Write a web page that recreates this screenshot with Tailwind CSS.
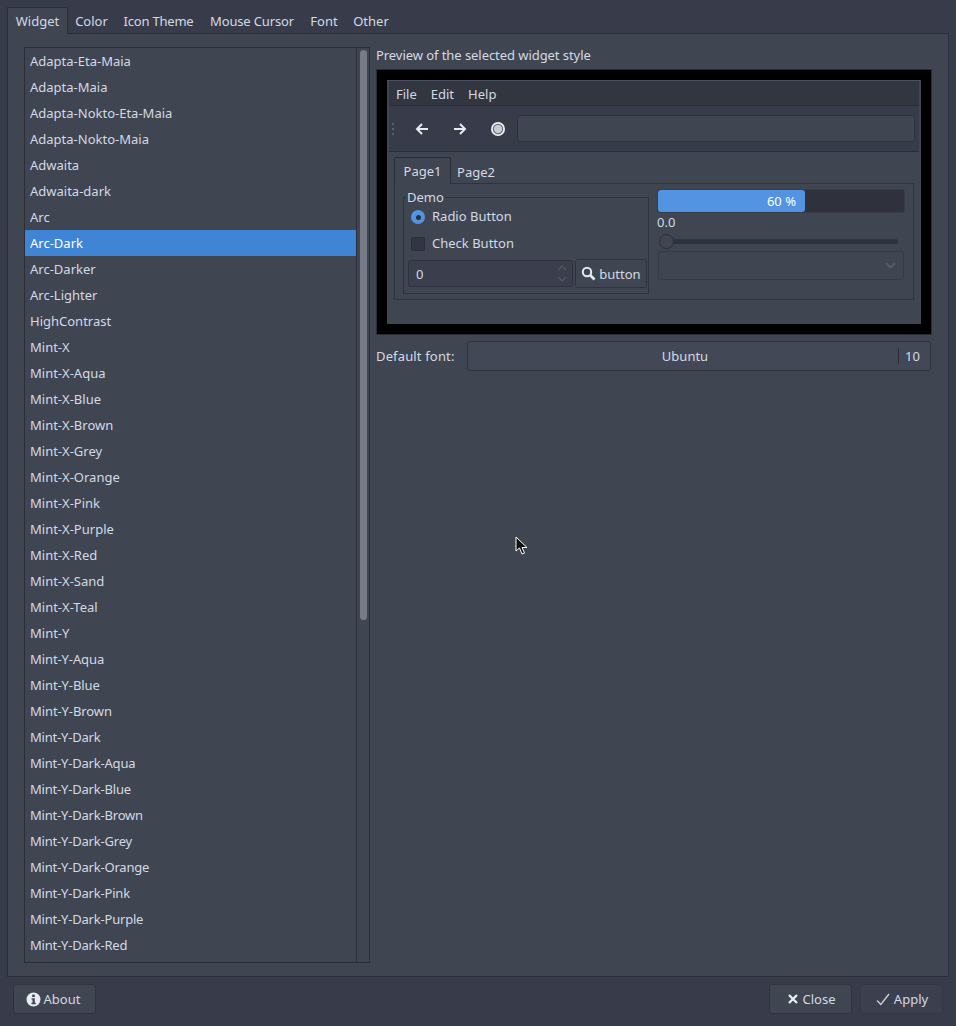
<!DOCTYPE html>
<html lang="en">
  <head>
    <meta charset="UTF-8" />
    <title>Qt5 Settings</title>
    <script src="https://cdn.jsdelivr.net/npm/@tailwindcss/browser@4"></script>
  </head>

  <body class="relative w-[956px] h-[1026px] overflow-hidden bg-[#383c4a] text-[#d3dae3] text-[13px] font-['Noto_Sans',sans-serif]">
    <!-- tabs -->
    <div class="flex h-[34px] pl-[7px] pt-[7px]">
      <div class="z-10 w-[61px] h-[27px] pt-[2px] flex items-center justify-center bg-[#404552] border border-b-0 border-[#2b2e39]">Widget</div>
      <div class="w-[47px] h-[26px] mt-px pt-[2px] flex items-center justify-center">Color</div>
      <div class="w-[87px] h-[26px] mt-px pt-[2px] tracking-[-0.2px] flex items-center justify-center">Icon Theme</div>
      <div class="w-[100px] h-[26px] mt-px pt-[2px] tracking-[-0.15px] flex items-center justify-center">Mouse Cursor</div>
      <div class="w-[44px] h-[26px] mt-px pt-[2px] flex items-center justify-center">Font</div>
      <div class="w-[50px] h-[26px] mt-px pt-[2px] flex items-center justify-center">Other</div>
    </div>

    <!-- main pane -->
    <div class="flex gap-[6px] ml-[7px] -mt-px w-[942px] h-[944px] pl-[16px] pt-[13px] bg-[#404552] border border-[#2b2e39]">
      <!-- theme list -->
      <div class="flex w-[346px] h-[916px] shrink-0 border border-[#2b2e39]">
        <div class="flex-1 overflow-hidden">
          <div class="h-[26px] pl-[5px] pt-[2px] flex items-center">Adapta-Eta-Maia</div>
          <div class="h-[26px] pl-[5px] pt-[2px] flex items-center">Adapta-Maia</div>
          <div class="h-[26px] pl-[5px] pt-[2px] flex items-center">Adapta-Nokto-Eta-Maia</div>
          <div class="h-[26px] pl-[5px] pt-[2px] flex items-center">Adapta-Nokto-Maia</div>
          <div class="h-[26px] pl-[5px] pt-[2px] flex items-center">Adwaita</div>
          <div class="h-[26px] pl-[5px] pt-[2px] flex items-center">Adwaita-dark</div>
          <div class="h-[26px] pl-[5px] pt-[2px] flex items-center">Arc</div>
          <div class="h-[26px] pl-[5px] pt-[2px] flex items-center bg-[#4084d6] text-white">Arc-Dark</div>
          <div class="h-[26px] pl-[5px] pt-[2px] flex items-center">Arc-Darker</div>
          <div class="h-[26px] pl-[5px] pt-[2px] flex items-center">Arc-Lighter</div>
          <div class="h-[26px] pl-[5px] pt-[2px] flex items-center">HighContrast</div>
          <div class="h-[26px] pl-[5px] pt-[2px] flex items-center">Mint-X</div>
          <div class="h-[26px] pl-[5px] pt-[2px] flex items-center">Mint-X-Aqua</div>
          <div class="h-[26px] pl-[5px] pt-[2px] flex items-center">Mint-X-Blue</div>
          <div class="h-[26px] pl-[5px] pt-[2px] flex items-center">Mint-X-Brown</div>
          <div class="h-[26px] pl-[5px] pt-[2px] flex items-center">Mint-X-Grey</div>
          <div class="h-[26px] pl-[5px] pt-[2px] flex items-center">Mint-X-Orange</div>
          <div class="h-[26px] pl-[5px] pt-[2px] flex items-center">Mint-X-Pink</div>
          <div class="h-[26px] pl-[5px] pt-[2px] flex items-center">Mint-X-Purple</div>
          <div class="h-[26px] pl-[5px] pt-[2px] flex items-center">Mint-X-Red</div>
          <div class="h-[26px] pl-[5px] pt-[2px] flex items-center">Mint-X-Sand</div>
          <div class="h-[26px] pl-[5px] pt-[2px] flex items-center">Mint-X-Teal</div>
          <div class="h-[26px] pl-[5px] pt-[2px] flex items-center">Mint-Y</div>
          <div class="h-[26px] pl-[5px] pt-[2px] tracking-[-0.1px] flex items-center">Mint-Y-Aqua</div>
          <div class="h-[26px] pl-[5px] pt-[2px] tracking-[-0.1px] flex items-center">Mint-Y-Blue</div>
          <div class="h-[26px] pl-[5px] pt-[2px] tracking-[-0.1px] flex items-center">Mint-Y-Brown</div>
          <div class="h-[26px] pl-[5px] pt-[2px] tracking-[-0.2px] flex items-center">Mint-Y-Dark</div>
          <div class="h-[26px] pl-[5px] pt-[2px] tracking-[-0.2px] flex items-center">Mint-Y-Dark-Aqua</div>
          <div class="h-[26px] pl-[5px] pt-[2px] tracking-[-0.2px] flex items-center">Mint-Y-Dark-Blue</div>
          <div class="h-[26px] pl-[5px] pt-[2px] tracking-[-0.2px] flex items-center">Mint-Y-Dark-Brown</div>
          <div class="h-[26px] pl-[5px] pt-[2px] tracking-[-0.2px] flex items-center">Mint-Y-Dark-Grey</div>
          <div class="h-[26px] pl-[5px] pt-[2px] tracking-[-0.2px] flex items-center">Mint-Y-Dark-Orange</div>
          <div class="h-[26px] pl-[5px] pt-[2px] tracking-[-0.2px] flex items-center">Mint-Y-Dark-Pink</div>
          <div class="h-[26px] pl-[5px] pt-[2px] tracking-[-0.2px] flex items-center">Mint-Y-Dark-Purple</div>
          <div class="h-[26px] pl-[5px] pt-[2px] tracking-[-0.2px] flex items-center">Mint-Y-Dark-Red</div>
        </div>
        <div class="w-[13px] shrink-0 border-l border-[#2b2e39] pt-[2px] pl-[3px]">
          <div class="w-[7px] h-[570px] rounded-full bg-[#767b87]"></div>
        </div>
      </div>

      <!-- preview column -->
      <div class="w-[556px] shrink-0">
        <div class="h-[22px] -mt-[1px] pb-[3px] tracking-[-0.06px] flex items-center">Preview of the selected widget style</div>

        <div class="h-[266px] mt-[1px] border border-[#2b2e39] bg-black p-[10px]">
          <div class="h-[244px] bg-[#404552] px-[2px] border-t border-[#4b5060]">
            <div class="flex items-center gap-[14px] h-[25px] pl-[7px] pt-[3px] bg-[#323641] border-b border-[#2b2e39]">
              <span>File</span><span>Edit</span><span>Help</span>
            </div>
            <div class="relative flex items-center h-[46px] bg-[#383c4a] border-b border-[#2b2e39]">
              <div class="ml-[3px] flex flex-col gap-[3px]">
                <div class="w-[2px] h-[2px] bg-[#5c6170]"></div>
                <div class="w-[2px] h-[2px] bg-[#5c6170]"></div>
                <div class="w-[2px] h-[2px] bg-[#5c6170]"></div>
              </div>
              <svg class="ml-[21px]" width="14" height="14" viewBox="0 0 14 14" fill="none" stroke="#e8ebf0" stroke-width="2"><path d="M13 7H2M7 2 2 7l5 5" /></svg>
              <svg class="ml-[24px]" width="14" height="14" viewBox="0 0 14 14" fill="none" stroke="#e8ebf0" stroke-width="2"><path d="M1 7h11M7 2l5 5-5 5" /></svg>
              <svg class="ml-[23px]" width="16" height="16" viewBox="0 0 16 16"><circle cx="8" cy="8" r="7" fill="#eef0f3" /><circle cx="8" cy="8" r="5.2" fill="#5c6170" /><circle cx="8" cy="8" r="4.2" fill="#c9ccd2" /></svg>
              <div class="ml-[11px] w-[398px] h-[27px] rounded-[3px] bg-[#404552] border border-[#2f3340]"></div>
            </div>

            <!-- demo tabs -->
            <div class="flex pl-[5px] pt-[5px] h-[32px]">
              <div class="z-10 w-[57px] h-[27px] pt-[2px] flex items-center justify-center bg-[#404552] border border-b-0 border-[#2b2e39]">Page1</div>
              <div class="w-[50px] h-[26px] mt-px pt-[4px] flex items-center justify-center">Page2</div>
            </div>
            <div class="flex gap-[8px] ml-[5px] -mt-px w-[520px] h-[117px] pl-[8px] pt-[5px] border border-[#2f3340]">
              <!-- group box -->
              <div class="relative w-[246px] h-[97px] mt-[8px] border border-[#2f3340] shrink-0">
                <span class="absolute left-[2px] -top-[9px] px-px h-[17px] flex items-center bg-[#404552]">Demo</span>
                <div class="flex items-center h-[20px] mt-[9px] pl-[7px] gap-[7px]">
                  <div class="w-[14px] h-[14px] rounded-full bg-[#5294e2] flex items-center justify-center">
                    <div class="w-[5px] h-[5px] rounded-full bg-[#2b2e39]"></div>
                  </div>
                  <span>Radio Button</span>
                </div>
                <div class="flex items-center h-[20px] mt-[7px] pl-[7px] gap-[7px]">
                  <div class="w-[14px] h-[14px] rounded-[2px] bg-[#323644] border border-[#2b2e39]"></div>
                  <span>Check Button</span>
                </div>
                <div class="flex items-center gap-[2px] pl-[4px] mt-[5px]">
                  <div class="flex items-center justify-between w-[165px] h-[27px] pl-[7px] pr-[5px] rounded-[3px] bg-[#3b3f4d] border border-[#2f3340]">
                    <span class="pt-[2px]">0</span>
                    <div class="flex flex-col gap-[5px]">
                      <svg class="block" width="10" height="6" viewBox="0 0 10 6" fill="none" stroke="#535866" stroke-width="1.2"><path d="M1 5l4-4 4 4" /></svg>
                      <svg class="block" width="10" height="6" viewBox="0 0 10 6" fill="none" stroke="#535866" stroke-width="1.2"><path d="M1 1l4 4 4-4" /></svg>
                    </div>
                  </div>
                  <div class="flex items-center justify-center gap-[3px] w-[72px] h-[29px] rounded-[3px] bg-[#404552] border border-[#2f3340]">
                    <svg width="15" height="15" viewBox="0 0 15 15" fill="none" stroke="#e8ebf0"><circle cx="6" cy="6" r="4.2" stroke-width="2" /><path d="M9 9l4.5 4.5" stroke-width="2.6" /></svg>
                    <span class="pt-[2px]">button</span>
                  </div>
                </div>
              </div>

              <!-- right side -->
              <div class="w-[248px] shrink-0">
                <div class="flex h-[24px] rounded-[3px] bg-[#2f313d] border border-[#383c4a]">
                  <div class="w-[147px] h-full pr-[9px] pt-[2px] rounded-[3px] bg-[#5294e2] text-white flex items-center justify-end">60 %</div>
                </div>
                <div class="h-[19px] flex items-center">0.0</div>
                <div class="relative h-[18px] pl-[9px] pr-[7px] flex items-center">
                  <div class="w-full h-[5px] rounded-full bg-[#2f3340]"></div>
                  <div class="absolute left-[2px] top-[2px] w-[15px] h-[15px] rounded-full bg-[#404552] border border-[#2b2e39]"></div>
                </div>
                <div class="flex items-center justify-end w-[246px] h-[29px] ml-px mt-[1px] pr-[7px] rounded-[3px] bg-[#404552] border border-[#373b48]">
                  <svg width="11" height="7" viewBox="0 0 11 7" fill="none" stroke="#575c6b" stroke-width="2"><path d="M1 1l4.5 4.5L10 1" /></svg>
                </div>
              </div>
            </div>
          </div>
        </div>

        <!-- default font -->
        <div class="flex items-center mt-[6px] h-[30px]">
          <div class="w-[91px] shrink-0 pt-[2px] tracking-[0.15px]">Default font:</div>
          <div class="flex items-center w-[464px] h-[30px] rounded-[3px] bg-[#434857] border border-[#2f3340]">
            <div class="w-[430px] pl-[4px] pt-[2px] text-center">Ubuntu</div>
            <div class="h-[16px] border-l border-[#2b2e39] pl-[6px] pt-[2px] flex items-center">10</div>
          </div>
        </div>
      </div>
    </div>

    <!-- bottom buttons -->
    <div class="flex items-center mt-[7px] px-[13px] gap-[8px]">
      <div class="flex items-center justify-center gap-[3px] w-[83px] h-[30px] pr-[3px] rounded-[3px] bg-[#404552] border border-[#2f3340]">
        <svg width="15" height="15" viewBox="0 0 15 15"><circle cx="7.5" cy="7.5" r="7" fill="#e8ebf0" /><rect x="6.2" y="2.6" width="2.6" height="2.4" fill="#404552" /><path d="M5.5 6.2h3.3v4.6h1v1.4H5.5v-1.4h1V7.6h-1z" fill="#404552" /></svg>
        <span class="pt-[2px]">About</span>
      </div>
      <div class="flex-1"></div>
      <div class="flex items-center justify-center gap-[5px] w-[83px] h-[30px] pl-[2px] rounded-[3px] bg-[#404552] border border-[#2f3340]">
        <svg width="10" height="10" viewBox="0 0 10 10" fill="none" stroke="#e8ebf0" stroke-width="2.4"><path d="M1 1l8 8M9 1l-8 8" /></svg>
        <span class="pt-[2px]">Close</span>
      </div>
      <div class="flex items-center justify-center gap-[4px] w-[83px] h-[30px] pl-[1px] rounded-[3px] bg-[#3c404e] border border-[#343845]">
        <svg width="14" height="13" viewBox="0 0 14 13" fill="none" stroke="#c9ced6" stroke-width="1.4"><path d="M1 7.5 4.8 11.5 13 1" /></svg>
        <span class="pt-[2px]">Apply</span>
      </div>
    </div>

    <!-- mouse pointer -->
    <svg class="absolute left-[515px] top-[536px]" width="14" height="20" viewBox="0 0 14 20"><path d="M1 1v14l3.5-3 2.5 6 2.5-1-2.5-5.500h5z" fill="#111" stroke="#fff" stroke-width="1" /></svg>
  </body>
</html>
